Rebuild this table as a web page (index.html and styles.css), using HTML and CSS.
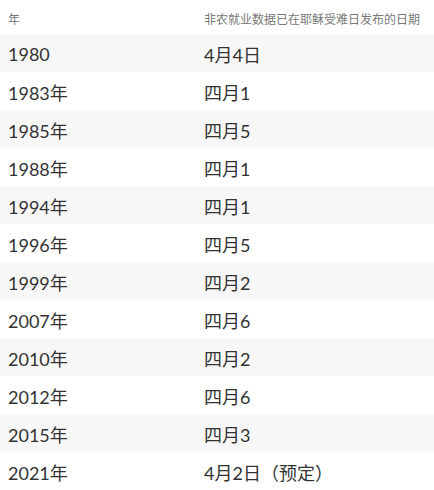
FILE: index.html
```html
<!DOCTYPE html>
<html lang="zh">
<head>
<meta charset="utf-8">
<link rel="stylesheet" href="styles.css">
</head>
<body>
<table class="tbl">
  <thead>
    <tr><th class="c1">年</th><th class="c2">非农就业数据已在耶稣受难日发布的日期</th></tr>
  </thead>
  <tbody>
    <tr><td>1980</td><td>4月4日</td></tr>
    <tr><td>1983年</td><td>四月1</td></tr>
    <tr><td>1985年</td><td>四月5</td></tr>
    <tr><td>1988年</td><td>四月1</td></tr>
    <tr><td>1994年</td><td>四月1</td></tr>
    <tr><td>1996年</td><td>四月5</td></tr>
    <tr><td>1999年</td><td>四月2</td></tr>
    <tr><td>2007年</td><td>四月6</td></tr>
    <tr><td>2010年</td><td>四月2</td></tr>
    <tr><td>2012年</td><td>四月6</td></tr>
    <tr><td>2015年</td><td>四月3</td></tr>
    <tr><td>2021年</td><td>4月2日（预定）</td></tr>
  </tbody>
</table>
</body>
</html>
```
FILE: styles.css
```css
html, body {
  margin: 0;
  padding: 0;
  background: #fff;
}
.tbl {
  width: 434px;
  border-collapse: collapse;
  font-family: Lato, "Noto Sans CJK SC", sans-serif;
  color: #333;
}
.tbl th {
  height: 32px;
  padding: 2px 8px 0;
  text-align: left;
  font-weight: normal;
  font-size: 12px;
  color: #777;
  vertical-align: middle;
}
.tbl th.c1 {
  width: 180px;
}
.tbl td {
  height: 36px;
  padding: 2px 8px 0;
  font-size: 18px;
  vertical-align: middle;
}
.tbl td:first-child {
  width: 180px;
}
.tbl tbody tr:nth-child(odd) {
  background: #f7f7f7;
}
```
